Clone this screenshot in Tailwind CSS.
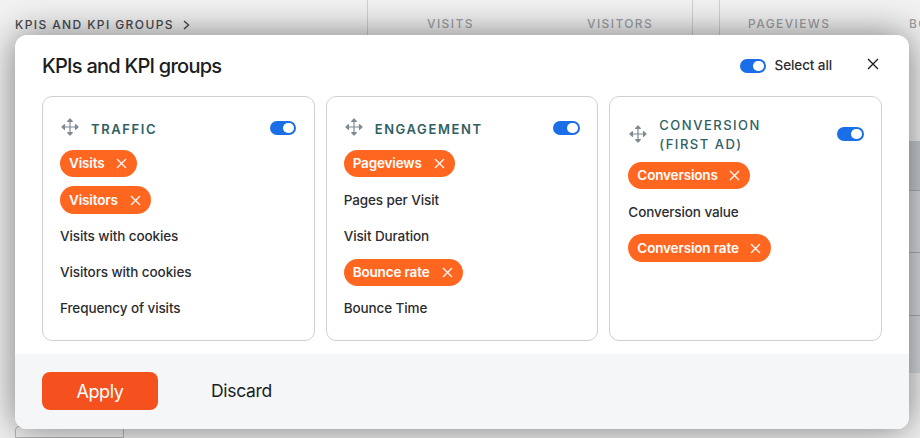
<!DOCTYPE html>
<html>
<head>
<meta charset="utf-8">
<script src="https://cdn.jsdelivr.net/npm/@tailwindcss/browser@4"></script>
</head>
<body class="w-[920px] h-[438px] overflow-hidden bg-[#f2f2f2] font-['Inter',sans-serif]">
<div class="relative w-[920px] h-[438px] overflow-hidden bg-[#f2f2f2]">
  <!-- page behind -->
  <div class="flex h-[35px] items-start text-[12px] font-medium tracking-[1.4px] text-[#a0a2a5] whitespace-nowrap">
    <div class="flex shrink-0 w-[368px] h-[35px] items-center gap-2 pl-[15px] pt-[14px] text-[#4a4c50] border-r border-[#d0d0d0]">KPIS AND KPI GROUPS
      <svg class="w-[9px] h-[10px]" viewBox="0 0 9 10" fill="none" stroke="#4a4c50" stroke-width="1.5"><path d="M2 1l4.500 4L2 9"/></svg>
    </div>
    <div class="flex shrink-0 w-[325px] h-[35px] items-center pt-[12px] pl-[59px] border-r border-[#d0d0d0]"><span class="w-[160px]">VISITS</span><span>VISITORS</span></div>
    <div class="shrink-0 w-[27px] h-[35px] border-r border-[#d0d0d0]"></div>
    <div class="flex shrink-0 h-[35px] items-center pt-[12px] pl-[28px]"><span class="w-[161px]">PAGEVIEWS</span><span>BOUNCE</span></div>
  </div>
  <div class="flex flex-col h-[403px]">
    <div class="h-[109px]"></div>
    <div class="h-[238px] ml-[367px] bg-[#d8dbde] flex flex-col">
      <div class="h-[50px] bg-[#c8ccd0] border-b border-[#aeb1b4]"></div>
      <div class="h-[62px] border-b border-[#aeb1b4]"></div>
      <div class="h-[63px] border-b border-[#aeb1b4]"></div>
    </div>
    <div class="flex-1 pl-[15px] pt-[53px]"><div class="w-[109px] h-[12px] rounded-t border border-[#b8b8b8]"></div></div>
  </div>

  <!-- modal -->
  <div class="absolute left-[15px] top-[35px] w-[894px] h-[394px] rounded-[12px] bg-white overflow-hidden shadow-[0_0_36px_rgba(0,0,0,0.5)] flex flex-col">
    <div class="flex-1 px-[27px]">
      <div class="flex items-center h-[61px]">
        <h2 class="text-[20px] font-medium tracking-[-0.75px] text-[#1b1d21]">KPIs and KPI groups</h2>
        <div class="ml-auto flex items-center gap-[9px] pr-[35px]">
          <span class="relative block w-[26px] h-[14px] rounded-full bg-[#1a6fe8]"><span class="absolute right-[2px] top-[2px] w-[11px] h-[10px] rounded-full bg-white"></span></span>
          <span class="text-[13.500px] font-medium tracking-[-0.1px] text-[#2b2d31]">Select all</span>
        </div>
        <svg class="w-[12px] h-[12px] mb-[3px] mr-[3px]" viewBox="0 0 12 12" fill="none" stroke="#1b1d21" stroke-width="1.4"><path d="M1 1l10 10M11 1L1 11"/></svg>
      </div>
      <div class="grid grid-cols-3 gap-[11px] h-[245px]">
        <div class="rounded-[10px] border border-[#cfd0d2] pl-[17px] pr-[18px] pt-[17px]">
          <div class="flex items-center h-[30px] pl-[1px]">
            <svg class="w-[18px] h-[18px] mb-[4px]" viewBox="0 0 18 18" fill="#7f8a92" stroke="#7f8a92" stroke-width="1.2" stroke-linejoin="round"><path d="M9 3v12M3 9h12" fill="none"/><path d="M6.700 3.500L9 1l2.300 2.500zM6.700 14.500L9 17l2.300-2.500zM3.500 6.700L1 9l2.500 2.300zM14.500 6.700L17 9l-2.500 2.300z"/></svg>
            <span class="ml-[12px] pt-[2px] text-[13px] font-semibold tracking-[1.600px] text-[#2f6163]">TRAFFIC</span>
            <span class="relative block mb-[2px] ml-auto w-[26px] h-[14px] rounded-full bg-[#1a6fe8]"><span class="absolute right-[2px] top-[2px] w-[11px] h-[10px] rounded-full bg-white"></span></span>
          </div>
          <div class="flex flex-col items-start mt-[6px] text-[13.500px] font-medium tracking-[-0.1px] text-[#2b2d31]">
            <span class="flex items-center h-[27px] gap-[12px] pl-[9px] pr-[10px] rounded-full bg-[#ff6720] text-white font-semibold tracking-[-0.15px]">Visits<svg class="w-[11px] h-[11px]" viewBox="0 0 11 11" fill="none" stroke="#fff" stroke-width="1.2"><path d="M1 1l9 9M10 1l-9 9"/></svg></span>
            <span class="flex items-center h-[28px] mt-[9px] gap-[12px] pl-[9px] pr-[10px] rounded-full bg-[#ff6720] text-white font-semibold tracking-[-0.15px]">Visitors<svg class="w-[11px] h-[11px]" viewBox="0 0 11 11" fill="none" stroke="#fff" stroke-width="1.2"><path d="M1 1l9 9M10 1l-9 9"/></svg></span>
            <span class="flex items-center h-[27px] mt-[9px]">Visits with cookies</span>
            <span class="flex items-center h-[27px] mt-[9px]">Visitors with cookies</span>
            <span class="flex items-center h-[27px] mt-[9px]">Frequency of visits</span>
          </div>
        </div>
        <div class="rounded-[10px] border border-[#cfd0d2] pl-[17px] pr-[17px] pt-[17px]">
          <div class="flex items-center h-[30px] pl-[1px]">
            <svg class="w-[18px] h-[18px] mb-[4px]" viewBox="0 0 18 18" fill="#7f8a92" stroke="#7f8a92" stroke-width="1.2" stroke-linejoin="round"><path d="M9 3v12M3 9h12" fill="none"/><path d="M6.700 3.500L9 1l2.300 2.500zM6.700 14.500L9 17l2.300-2.500zM3.500 6.700L1 9l2.500 2.300zM14.500 6.700L17 9l-2.500 2.300z"/></svg>
            <span class="ml-[12px] pt-[2px] text-[13px] font-semibold tracking-[1.600px] text-[#2f6163]">ENGAGEMENT</span>
            <span class="relative block mb-[2px] ml-auto w-[27px] h-[14px] rounded-full bg-[#1a6fe8]"><span class="absolute right-[2px] top-[2px] w-[11px] h-[10px] rounded-full bg-white"></span></span>
          </div>
          <div class="flex flex-col items-start mt-[6px] text-[13.500px] font-medium tracking-[-0.1px] text-[#2b2d31]">
            <span class="flex items-center h-[27px] gap-[12px] pl-[9px] pr-[10px] rounded-full bg-[#ff6720] text-white font-semibold tracking-[-0.15px]">Pageviews<svg class="w-[11px] h-[11px]" viewBox="0 0 11 11" fill="none" stroke="#fff" stroke-width="1.2"><path d="M1 1l9 9M10 1l-9 9"/></svg></span>
            <span class="flex items-center h-[28px] mt-[9px]">Pages per Visit</span>
            <span class="flex items-center h-[27px] mt-[9px]">Visit Duration</span>
            <span class="flex items-center h-[27px] mt-[9px] gap-[12px] pl-[9px] pr-[10px] rounded-full bg-[#ff6720] text-white font-semibold tracking-[-0.15px]">Bounce rate<svg class="w-[11px] h-[11px]" viewBox="0 0 11 11" fill="none" stroke="#fff" stroke-width="1.2"><path d="M1 1l9 9M10 1l-9 9"/></svg></span>
            <span class="flex items-center h-[27px] mt-[9px]">Bounce Time</span>
          </div>
        </div>
        <div class="rounded-[10px] border border-[#cfd0d2] pl-[18px] pr-[17px] pt-[17px]">
          <div class="flex items-center h-[42px] pl-[1px]">
            <svg class="w-[18px] h-[18px] mt-[-3px]" viewBox="0 0 18 18" fill="#7f8a92" stroke="#7f8a92" stroke-width="1.2" stroke-linejoin="round"><path d="M9 3v12M3 9h12" fill="none"/><path d="M6.700 3.500L9 1l2.300 2.500zM6.700 14.500L9 17l2.300-2.500zM3.500 6.700L1 9l2.500 2.300zM14.500 6.700L17 9l-2.500 2.300z"/></svg>
            <span class="ml-[12px] text-[13px] leading-[19px] font-medium tracking-[1.500px] text-[#2f6163]">CONVERSION<br>(FIRST AD)</span>
            <span class="relative block mb-[2px] ml-auto w-[27px] h-[14px] rounded-full bg-[#1a6fe8]"><span class="absolute right-[2px] top-[2px] w-[11px] h-[10px] rounded-full bg-white"></span></span>
          </div>
          <div class="flex flex-col items-start mt-[6px] text-[13.500px] font-medium tracking-[-0.1px] text-[#2b2d31]">
            <span class="flex items-center h-[27px] gap-[11px] pl-[9px] pr-[10px] rounded-full bg-[#ff6720] text-white font-semibold tracking-[-0.15px]">Conversions<svg class="w-[11px] h-[11px]" viewBox="0 0 11 11" fill="none" stroke="#fff" stroke-width="1.2"><path d="M1 1l9 9M10 1l-9 9"/></svg></span>
            <span class="flex items-center h-[28px] mt-[9px]">Conversion value</span>
            <span class="flex items-center h-[28px] mt-[8px] gap-[11px] pl-[9px] pr-[10px] rounded-full bg-[#ff6720] text-white font-semibold tracking-[-0.15px]">Conversion rate<svg class="w-[11px] h-[11px]" viewBox="0 0 11 11" fill="none" stroke="#fff" stroke-width="1.2"><path d="M1 1l9 9M10 1l-9 9"/></svg></span>
          </div>
        </div>
      </div>
    </div>
    <div class="flex items-center h-[75px] bg-[#f4f6f8] px-[27px] pb-[2px] gap-[53px]">
      <span class="flex items-center justify-center w-[116px] h-[38px] pt-[2px] rounded-[8px] bg-[#f4511e] text-white text-[18px] tracking-[-0.4px]">Apply</span>
      <span class="pt-[2px] text-[17.500px] tracking-[-0.3px] text-[#1b1d21]">Discard</span>
    </div>
  </div>
</div>
</body>
</html>
